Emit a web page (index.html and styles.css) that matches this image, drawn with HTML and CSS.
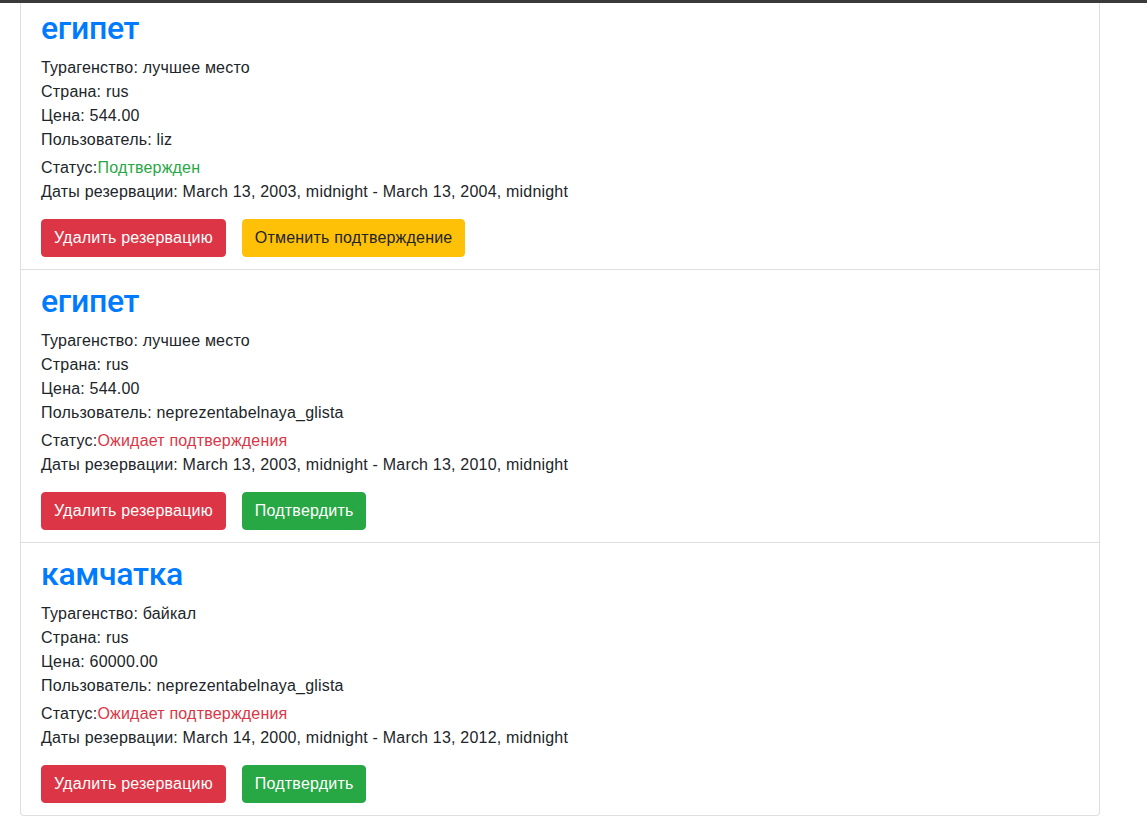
FILE: index.html
```html
<!DOCTYPE html>
<html lang="ru">
<head>
<meta charset="utf-8">
<title>Резервации</title>
<link rel="stylesheet" href="styles.css">
</head>
<body>
<div class="topbar"></div>
<div class="page">
  <ul class="list-group">
    <li class="item">
      <h2 class="title">египет</h2>
      <div class="info">
        <div>Турагенство: лучшее место</div>
        <div>Страна: rus</div>
        <div>Цена: 544.00</div>
        <div>Пользователь: liz</div>
      </div>
      <div class="status">Статус:<span class="ok">Подтвержден</span></div>
      <p class="dates">Даты резервации: March 13, 2003, midnight - March 13, 2004, midnight</p>
      <div class="actions">
        <button class="btn btn-danger">Удалить резервацию</button>
        <button class="btn btn-warning">Отменить подтверждение</button>
      </div>
    </li>
    <li class="item">
      <h2 class="title">египет</h2>
      <div class="info">
        <div>Турагенство: лучшее место</div>
        <div>Страна: rus</div>
        <div>Цена: 544.00</div>
        <div>Пользователь: neprezentabelnaya_glista</div>
      </div>
      <div class="status">Статус:<span class="wait">Ожидает подтверждения</span></div>
      <p class="dates">Даты резервации: March 13, 2003, midnight - March 13, 2010, midnight</p>
      <div class="actions">
        <button class="btn btn-danger">Удалить резервацию</button>
        <button class="btn btn-success">Подтвердить</button>
      </div>
    </li>
    <li class="item">
      <h2 class="title">камчатка</h2>
      <div class="info">
        <div>Турагенство: байкал</div>
        <div>Страна: rus</div>
        <div>Цена: 60000.00</div>
        <div>Пользователь: neprezentabelnaya_glista</div>
      </div>
      <div class="status">Статус:<span class="wait">Ожидает подтверждения</span></div>
      <p class="dates">Даты резервации: March 14, 2000, midnight - March 13, 2012, midnight</p>
      <div class="actions">
        <button class="btn btn-danger">Удалить резервацию</button>
        <button class="btn btn-success">Подтвердить</button>
      </div>
    </li>
  </ul>
</div>
</body>
</html>
```

FILE: styles.css
```css
* { box-sizing: border-box; }
html, body {
  margin: 0;
  padding: 0;
  background: #fff;
  overflow: hidden;
}
body {
  font-family: "Liberation Sans", Arial, sans-serif;
  font-size: 16px;
  line-height: 1.5;
  letter-spacing: 0.2px;
  color: #212529;
}
.topbar {
  position: fixed;
  top: 0;
  left: 0;
  right: 0;
  height: 3px;
  background: #3a3a3a;
  z-index: 10;
}
.page {
  margin-top: -4px;
  padding-left: 20px;
  width: 1100px;
}
.list-group {
  list-style: none;
  margin: 0;
  padding: 0;
}
.item {
  border: 1px solid rgba(0, 0, 0, 0.125);
  padding: 12px 20px;
}
.item + .item { border-top: 0; }
.item:first-child { border-radius: 4px 4px 0 0; }
.item:last-child { border-radius: 0 0 4px 4px; }
.title {
  margin: 0 0 8px;
  font-family: Roboto, "Liberation Sans", sans-serif;
  font-weight: 500;
  font-size: 32px;
  line-height: 38px;
  letter-spacing: -0.3px;
  color: #007bff;
}
.info { padding-top: 1px; }
.status { margin-top: 4px; }
.ok { color: #28a745; }
.wait { color: #dc3545; }
.dates { margin: 0 0 15px; }
.actions {
  display: flex;
  gap: 16px;
}
.btn {
  font-family: inherit;
  font-size: 16px;
  line-height: 1.5;
  letter-spacing: 0.2px;
  padding: 6px 12px;
  border: 1px solid transparent;
  border-radius: 4px;
  cursor: pointer;
}
.btn-danger { background: #dc3545; border-color: #dc3545; color: #fff; }
.btn-warning { background: #ffc107; border-color: #ffc107; color: #212529; }
.btn-success { background: #28a745; border-color: #28a745; color: #fff; }
```
